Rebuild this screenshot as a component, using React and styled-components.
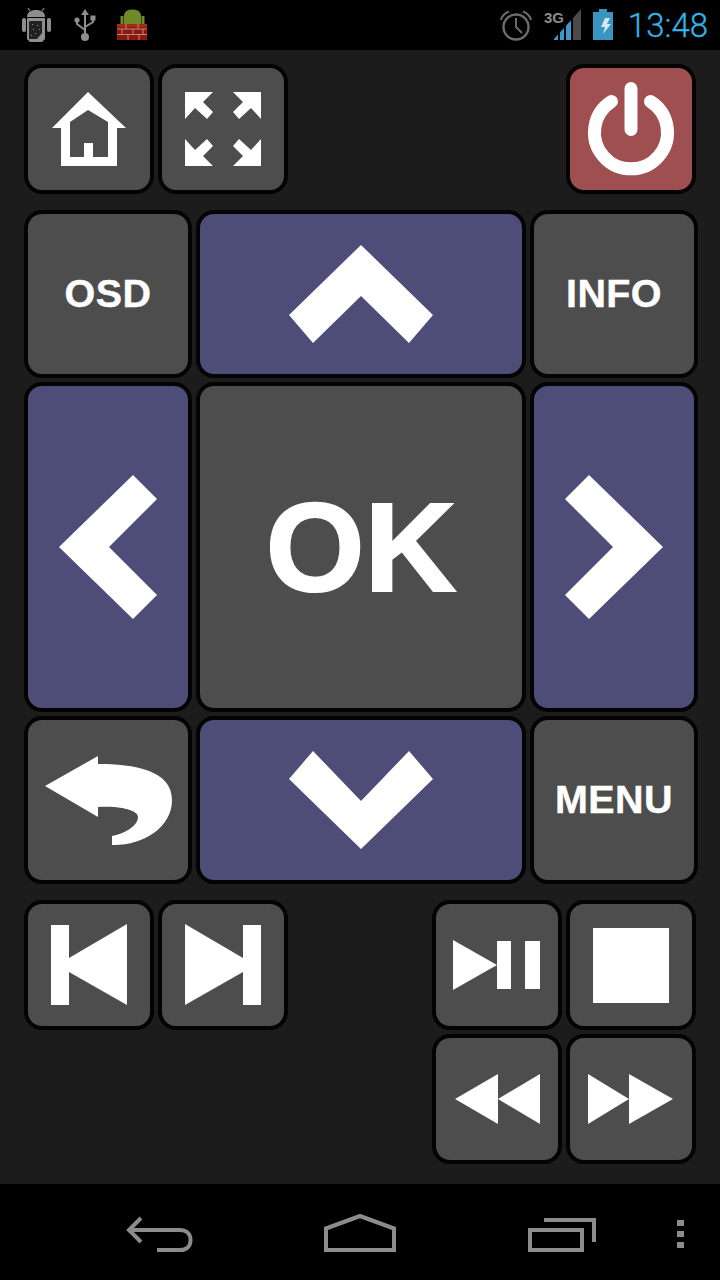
import React from 'react'
import styled, { createGlobalStyle } from 'styled-components'

const GlobalStyle = createGlobalStyle`
  html, body {
    margin: 0;
    padding: 0;
    background: #000;
  }
`

const Screen = styled.div`
  width: 720px;
  height: 1280px;
  display: flex;
  flex-direction: column;
  background: #1c1c1c;
  overflow: hidden;
`

const StatusBar = styled.div`
  height: 50px;
  flex: none;
  display: flex;
  justify-content: space-between;
  padding: 0 12px;
  background: #000;
`
const StatusGroup = styled.div`
  display: flex;
  align-items: center;
`
const StatusIcon = styled.svg`
  display: block;
  height: 50px;
  width: ${p => p.$w}px;
`
const Clock = styled.span`
  margin-left: 6px;
  font-family: Roboto, "Liberation Sans", sans-serif;
  font-weight: 300;
  font-size: 33px;
  color: #33b5e5;
  -webkit-text-stroke: 0.3px #33b5e5;
`

const Main = styled.div`
  flex: 1;
  display: flex;
  flex-direction: column;
  gap: 16px;
  padding: 14px 22px 0 24px;
`
const ButtonRow = styled.div`
  display: flex;
  align-items: flex-start;
  justify-content: space-between;
  padding-right: 2px;
`
const KeyGroup = styled.div`
  display: flex;
  gap: 4px;
`
const MediaGrid = styled.div`
  display: grid;
  grid-template-columns: 130px 130px;
  grid-auto-rows: 130px;
  gap: 4px;
`
const Pad = styled.div`
  display: grid;
  grid-template-columns: 168px 330px 168px;
  grid-template-rows: 168px 330px 168px;
  gap: 4px;
`

const tones = {
  grey: '#4d4d4d',
  blue: '#4e4d78',
  red: '#a04f50',
}

const Key = styled.button`
  box-sizing: border-box;
  width: ${p => (p.$small ? '130px' : '100%')};
  height: ${p => (p.$small ? '130px' : '100%')};
  padding: 0;
  display: flex;
  align-items: center;
  justify-content: center;
  border: 4px solid #030303;
  border-radius: 18px;
  background: ${p => tones[p.$tone || 'grey']};
  color: #fff;
  font-family: "Liberation Sans", Arial, sans-serif;
  font-weight: 700;
  font-size: ${p => (p.$big ? '127px' : '39.5px')};
  letter-spacing: ${p => (p.$big ? '0' : '0.4px')};
  -webkit-text-stroke: ${p => (p.$big ? '2px' : '0.4px')} #fff;
  line-height: 1;
`
const Glyph = styled.svg`
  display: block;
  width: 100%;
  height: 100%;
  fill: #fff;
`

const NavBar = styled.div`
  height: 96px;
  flex: none;
  display: flex;
  background: #000;
`
const NavButton = styled.div`
  width: 80px;
  height: 96px;
  margin-left: ${p => p.$left}px;
`
const NavIcon = styled.svg`
  display: block;
  width: 80px;
  height: 96px;
  fill: none;
  stroke: #8c8c8c;
  stroke-width: 4;
`

// viewBoxes skip the 4px border so the numbers below are measured from the key's outer corner
const SMALL = '4 4 122 122'
const WIDE = '4 4 322 160'
const TALL = '4 4 160 322'
const LARGE = '4 4 160 160'

const corner = 'M27 28H55L45 38L55 48L49 55L37 44L27 55Z'

const AndroidSim = () => (
  <StatusIcon $w={48} viewBox="0 0 48 50">
    <path d="M15 17C15 12 19 10 24 10C29 10 33 12 33 17Z" fill="#8e8e8e" />
    <path d="M18 11L16 8M30 11L32 8" stroke="#8e8e8e" strokeWidth="1.2" />
    <rect x="10" y="18" width="4" height="14" rx="2" fill="#8e8e8e" />
    <rect x="35" y="18" width="4" height="14" rx="2" fill="#8e8e8e" />
    <path d="M15 18H33V39L30 42H18L15 39Z" fill="#8e8e8e" />
    <path d="M17 22L18 21H30V33L25 39H17Z" fill="#222" />
    <g fill="#8e8e8e">
      <rect x="20" y="24" width="1" height="1" />
      <rect x="25" y="25" width="1" height="1" />
      <rect x="21" y="29" width="1" height="1" />
      <rect x="27" y="29" width="1" height="1" />
      <rect x="23" y="33" width="1" height="1" />
      <rect x="19" y="35" width="1" height="1" />
    </g>
  </StatusIcon>
)

const Usb = () => (
  <StatusIcon $w={48} viewBox="0 0 48 50">
    <g fill="#8e8e8e">
      <path d="M25 9L29 15H21Z" />
      <rect x="24" y="14" width="2" height="20" />
      <circle cx="25" cy="37" r="4" />
      <circle cx="17" cy="20" r="2.6" />
      <rect x="30.5" y="15.5" width="5" height="5" />
    </g>
    <path d="M17 21V24L25 30M33 20V22L25 27" fill="none" stroke="#8e8e8e" strokeWidth="2" />
  </StatusIcon>
)

const Firewall = () => (
  <StatusIcon $w={48} viewBox="0 0 48 50">
    <path d="M16 24V16C16 12 19 9.5 24.5 9.5C30 9.5 33 12 33 16V24Z" fill="#6f8a2a" />
    <rect x="12.5" y="16" width="3" height="8" fill="#6f8a2a" />
    <rect x="33.5" y="16" width="3" height="8" fill="#6f8a2a" />
    <rect x="9" y="24" width="30" height="16" fill="#8a1710" />
    <rect x="9" y="24" width="30" height="3" fill="#a82c0c" />
    <path
      d="M9 29H39M9 34.5H39M18 24V29M30 24V29M14 29V34.5M25 29V34.5M35 29V34.5M20 34.5V40M31 34.5V40"
      fill="none"
      stroke="#b98a7a"
      strokeWidth="1"
    />
  </StatusIcon>
)

const Alarm = () => (
  <StatusIcon $w={44} viewBox="0 0 44 50">
    <g fill="none" stroke="#6c6c6c">
      <circle cx="22" cy="27" r="12.5" strokeWidth="2.4" />
      <path d="M22 18V27L28 33" strokeWidth="2" />
      <path d="M7 20C8 16 11 13 15 11.5M37 20C36 16 33 13 29 11.5" strokeWidth="2" />
    </g>
  </StatusIcon>
)

const Signal = () => (
  <StatusIcon $w={48} viewBox="0 0 48 50">
    <text x="6" y="23" fill="#8c8c8c" fontFamily="Liberation Sans" fontWeight="700" fontSize="15">
      3G
    </text>
    <g fill="#3a9ac9">
      <path d="M16 40L16 38.9L20 34.5V40Z" />
      <path d="M22 40V32.3L26 27.9V40Z" />
      <path d="M28 40V25.7L33 20.2V40Z" />
    </g>
    <path d="M35 40V18L43 9V40Z" fill="#4a4a4a" />
  </StatusIcon>
)

const Battery = () => (
  <StatusIcon $w={36} viewBox="0 0 36 50">
    <path d="M13 9H21V12H27V40H7V12H13Z" fill="#3a94c0" />
    <path d="M19 18H24L21 24H25L17 34L19 27H15Z" fill="#cfe8f3" />
  </StatusIcon>
)

const App = () => (
  <Screen>
    <GlobalStyle />
    <StatusBar>
      <StatusGroup>
        <AndroidSim />
        <Usb />
        <Firewall />
      </StatusGroup>
      <StatusGroup>
        <Alarm />
        <Signal />
        <Battery />
        <Clock>13:48</Clock>
      </StatusGroup>
    </StatusBar>

    <Main>
      <ButtonRow>
        <KeyGroup>
          <Key $small>
            <Glyph viewBox={SMALL}>
              <path
                fillRule="evenodd"
                d="M64 28L102 64H93V102H37V64H28ZM64 46L84 58V93H69V79H60V93H46V58Z"
              />
            </Glyph>
          </Key>
          <Key $small>
            <Glyph viewBox={SMALL}>
              <path d={corner} />
              <path d={corner} transform="matrix(-1 0 0 1 130 0)" />
              <path d={corner} transform="matrix(1 0 0 -1 0 130)" />
              <path d={corner} transform="matrix(-1 0 0 -1 130 130)" />
            </Glyph>
          </Key>
        </KeyGroup>
        <Key $small $tone="red">
          <Glyph viewBox={SMALL}>
            <path
              d="M45.5 37.5A36.5 36.5 0 1 0 84.5 37.5M65 24.5V65.5"
              fill="none"
              stroke="#fff"
              strokeWidth="13"
              strokeLinecap="round"
            />
          </Glyph>
        </Key>
      </ButtonRow>

      <Pad>
        <Key>OSD</Key>
        <Key $tone="blue">
          <Glyph viewBox={WIDE}>
            <path d="M165 35L237 105L213 133L165 86L117 133L93 105Z" />
          </Glyph>
        </Key>
        <Key>INFO</Key>
        <Key $tone="blue">
          <Glyph viewBox={TALL}>
            <path d="M35 165L109 93L133 117L85 165L133 213L109 237Z" />
          </Glyph>
        </Key>
        <Key $big>OK</Key>
        <Key $tone="blue">
          <Glyph viewBox={TALL}>
            <path d="M133 165L59 93L35 117L83 165L35 213L59 237Z" />
          </Glyph>
        </Key>
        <Key>
          <Glyph viewBox={LARGE}>
            <path d="M21 70L74 40V48C110 48 148 54 148 84C148 112 118 130 88 129V120C100 118 114 110 114 101C114 93 92 90 74 91V101Z" />
          </Glyph>
        </Key>
        <Key $tone="blue">
          <Glyph viewBox={WIDE}>
            <path d="M165 133L237 63L213 35L165 85L117 35L93 63Z" />
          </Glyph>
        </Key>
        <Key>MENU</Key>
      </Pad>

      <ButtonRow>
        <KeyGroup>
          <Key $small>
            <Glyph viewBox={SMALL}>
              <path d="M27 25H45V58L103 24V105L45 72V105H27Z" />
            </Glyph>
          </Key>
          <Key $small>
            <Glyph viewBox={SMALL}>
              <path d="M103 25H85V58L27 24V105L85 72V105H103Z" />
            </Glyph>
          </Key>
        </KeyGroup>
        <MediaGrid>
          <Key $small>
            <Glyph viewBox={SMALL}>
              <path d="M21 40L65 65L21 90Z" />
              <rect x="65" y="41" width="14" height="48" />
              <rect x="93" y="41" width="15" height="48" />
            </Glyph>
          </Key>
          <Key $small>
            <Glyph viewBox={SMALL}>
              <rect x="27" y="28" width="76" height="75" />
            </Glyph>
          </Key>
          <Key $small>
            <Glyph viewBox={SMALL}>
              <path d="M23 65L66 40V90Z" />
              <path d="M66 65L108 40V90Z" />
            </Glyph>
          </Key>
          <Key $small>
            <Glyph viewBox={SMALL}>
              <path d="M22 40L63 65L22 90Z" />
              <path d="M63 40L107 65L63 90Z" />
            </Glyph>
          </Key>
        </MediaGrid>
      </ButtonRow>
    </Main>

    <NavBar>
      <NavButton $left={120}>
        <NavIcon viewBox="0 0 80 96">
          <path d="M21 34L9 46L21 58M9 46H60C67 46 70.5 50.5 70.5 56C70.5 62 67 66 60 66H37" />
        </NavIcon>
      </NavButton>
      <NavButton $left={120}>
        <NavIcon viewBox="0 0 80 96">
          <path d="M6 44.5L40 32L74 44.5V66H6Z" />
        </NavIcon>
      </NavButton>
      <NavButton $left={120}>
        <NavIcon viewBox="0 0 80 96">
          <rect x="10" y="46" width="52" height="20" />
          <path d="M24 36H74V58" />
        </NavIcon>
      </NavButton>
      <NavButton $left={40}>
        <NavIcon viewBox="0 0 80 96">
          <g fill="#8c8c8c" stroke="none">
            <rect x="37" y="36" width="7" height="6" />
            <rect x="37" y="47" width="7" height="6" />
            <rect x="37" y="58" width="7" height="6" />
          </g>
        </NavIcon>
      </NavButton>
    </NavBar>
  </Screen>
)

export default App
